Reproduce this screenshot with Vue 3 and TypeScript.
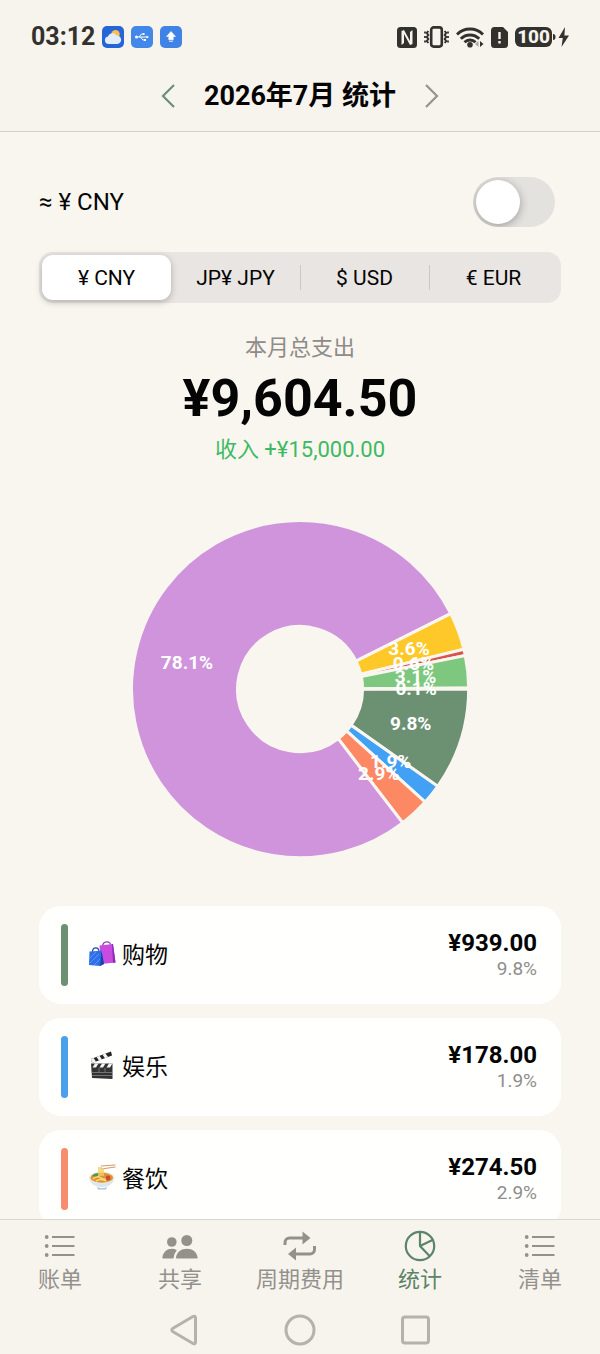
<script setup lang="ts">
import { computed, ref } from 'vue'

interface Slice {
  share: number
  color: string
}

interface Category {
  name: string
  icon: 'bags' | 'film' | 'noodles'
  amount: string
  share: string
  color: string
}

const currencies = ['¥ CNY', 'JP¥ JPY', '$ USD', '€ EUR']
const currency = ref('¥ CNY')
const convert = ref(false)

const slices: Slice[] = [
  { share: 9.8, color: '#6b9172' },
  { share: 1.9, color: '#42a1f4' },
  { share: 2.9, color: '#fd8964' },
  { share: 78.1, color: '#cf94dc' },
  { share: 3.6, color: '#fec928' },
  { share: 0.6, color: '#d9534f' },
  { share: 3.1, color: '#7dc87e' },
  { share: 0.1, color: '#8d9a90' },
]

const categories: Category[] = [
  { name: '购物', icon: 'bags', amount: '¥939.00', share: '9.8%', color: '#6b9172' },
  { name: '娱乐', icon: 'film', amount: '¥178.00', share: '1.9%', color: '#4aa0ea' },
  { name: '餐饮', icon: 'noodles', amount: '¥274.50', share: '2.9%', color: '#f78d6f' },
]

const tabs = [
  { label: '账单', icon: 'list' },
  { label: '共享', icon: 'people' },
  { label: '周期费用', icon: 'repeat' },
  { label: '统计', icon: 'pie' },
  { label: '清单', icon: 'list' },
]
const activeTab = '统计'

const OUTER = 168.5
const INNER = 62.5
const LABEL = 116

function point(radius: number, angle: number): string {
  return `${(radius * Math.cos(angle)).toFixed(2)} ${(radius * Math.sin(angle)).toFixed(2)}`
}

// Slices run clockwise starting at three o'clock.
const arcs = computed(() => {
  const total = slices.reduce((sum, s) => sum + s.share, 0)
  let start = 0
  return slices.map((s) => {
    const sweep = (s.share / total) * Math.PI * 2
    const end = start + sweep
    const mid = start + sweep / 2
    const large = sweep > Math.PI ? 1 : 0
    const d =
      `M${point(OUTER, start)} A${OUTER} ${OUTER} 0 ${large} 1 ${point(OUTER, end)} ` +
      `L${point(INNER, end)} A${INNER} ${INNER} 0 ${large} 0 ${point(INNER, start)} Z`
    start = end
    return {
      d,
      color: s.color,
      label: `${s.share.toFixed(1)}%`,
      x: LABEL * Math.cos(mid),
      y: LABEL * Math.sin(mid),
    }
  })
})
</script>

<template>
  <div class="screen">
    <header class="top">
      <div class="status">
        <div class="status-group">
          <span class="clock">03:12</span>
          <svg class="app-icon" viewBox="0 0 22 22" aria-hidden="true">
            <rect width="22" height="22" rx="5" fill="#2465d8" />
            <circle cx="13.5" cy="8.2" r="4.2" fill="#fbbf4c" />
            <path d="M6.5 18a3.8 3.8 0 0 1-.6-7.5A4.8 4.8 0 0 1 14.5 9.6a4.2 4.2 0 0 1 .8 8.4z" fill="#e3ecf8" />
          </svg>
          <svg class="app-icon" viewBox="0 0 22 22" aria-hidden="true">
            <rect width="22" height="22" rx="5" fill="#4388e8" />
            <g fill="none" stroke="#fff" stroke-width="1">
              <path d="M5 11h11M8 11l2.5-3h2M9.5 11l2.5 3h2" />
            </g>
            <circle cx="5.5" cy="11" r="1.5" fill="#fff" />
            <circle cx="12.7" cy="8" r="1.1" fill="#fff" />
            <rect x="13" y="13" width="2" height="2" fill="#fff" />
            <path d="M15.5 9.500l2.500 1.500-2.500 1.500z" fill="#fff" />
          </svg>
          <svg class="app-icon" viewBox="0 0 22 22" aria-hidden="true">
            <rect width="22" height="22" rx="5" fill="#4083e6" />
            <path d="M11 5.500l4.500 5h-2.300v3.300H8.800v-3.300H6.500z" fill="#fff" stroke="#fff" stroke-width=".6" stroke-linejoin="round" />
            <path d="M9 15.300h4" stroke="#d5e5fb" stroke-width="1" />
          </svg>
        </div>
        <div class="status-group">
          <svg width="20" height="21" viewBox="0 0 20 21" aria-hidden="true">
            <rect width="20" height="21" rx="3.5" fill="#33312d" />
            <path d="M4.500 18V4l2.500-1 6 11V5l2.500-2v14L13 18 7 7v9z" fill="#f7f4ee" />
          </svg>
          <svg width="25" height="22" viewBox="0 0 25 22" aria-hidden="true">
            <rect x="7.2" y="1.4" width="10.6" height="19.2" rx="2.5" fill="none" stroke="#33312d" stroke-width="2.6" />
            <path d="M4.300 5l-1.500 2 1.500 2-1.500 2 1.500 2-1.500 2 1.500 2M20.700 5l1.500 2-1.500 2 1.500 2-1.500 2 1.500 2-1.500 2" fill="none" stroke="#33312d" stroke-width="2" />
            <path d="M1 5.500v2M1 10v2M1 14.500v2M24 5.500v2M24 10v2M24 14.500v2" stroke="#33312d" stroke-width="1.8" />
          </svg>
          <svg width="28" height="22" viewBox="0 0 28 22" aria-hidden="true">
            <g fill="none" stroke="#33312d" stroke-width="3">
              <path d="M1 8.500a18.300 18.300 0 0 1 26 0" />
              <path d="M4.800 12.700a13 13 0 0 1 18.400 0" />
              <path d="M8.500 16.300a7.800 7.800 0 0 1 11 0" />
            </g>
            <circle cx="14" cy="18.7" r="2.8" fill="#33312d" />
            <path d="M22.500 15v6l-3.500-3z" fill="#aaa7a2" />
            <path d="M24 15v6l3.500-3z" fill="#33312d" />
          </svg>
          <svg width="17" height="21" viewBox="0 0 17 21" aria-hidden="true">
            <path d="M3.500 0h8.500l5 5v12.500a3.500 3.500 0 0 1-3.500 3.500h-10A3.500 3.500 0 0 1 0 17.500v-14A3.500 3.500 0 0 1 3.500 0z" fill="#33312d" />
            <path d="M8.500 5v7M8.500 14v2.500" stroke="#f7f4ee" stroke-width="2.4" />
          </svg>
          <span class="power">
            <span class="battery">100</span>
            <svg width="16" height="20" viewBox="0 0 16 20" aria-hidden="true">
              <path d="M0 7q2.500 0 2.500 3T0 13z" fill="#33312d" />
              <path d="M12 0L5.500 11h4.300L8.500 20 16 8.500h-4.600z" fill="#33312d" />
            </svg>
          </span>
        </div>
      </div>
      <div class="month">
        <button class="step" type="button" aria-label="上个月">
          <svg width="14" height="24" viewBox="0 0 14 24" aria-hidden="true">
            <path d="M13 1L2 12l11 11" fill="none" stroke="#6a9078" stroke-width="2.2" />
          </svg>
        </button>
        <h1>2026年7月 统计</h1>
        <button class="step" type="button" aria-label="下个月">
          <svg width="14" height="24" viewBox="0 0 14 24" aria-hidden="true">
            <path d="M1 1l11 11L1 23" fill="none" stroke="#96948f" stroke-width="2.2" />
          </svg>
        </button>
      </div>
    </header>

    <main>
      <div class="convert">
        <label for="convert">≈ ¥ CNY</label>
        <input id="convert" v-model="convert" type="checkbox" role="switch" />
      </div>

      <div class="segments" role="radiogroup" aria-label="货币">
        <label v-for="c in currencies" :key="c" class="segment">
          <input v-model="currency" type="radio" name="currency" :value="c" />
          <span>{{ c }}</span>
        </label>
      </div>

      <section class="summary">
        <p class="caption">本月总支出</p>
        <p class="total">¥9,604.50</p>
        <p class="income">收入 +¥15,000.00</p>
      </section>

      <svg class="chart" viewBox="-168 -168 336 336" role="img" aria-label="支出分类">
        <path v-for="a in arcs" :key="a.label" :d="a.d" :fill="a.color" />
        <text v-for="a in arcs" :key="a.label" :x="a.x" :y="a.y" dy="6">{{ a.label }}</text>
      </svg>

      <ul class="categories">
        <li v-for="c in categories" :key="c.name" class="card">
          <span class="bar" :style="{ background: c.color }"></span>
          <span class="title">
            <svg v-if="c.icon === 'bags'" class="emoji" viewBox="0 0 28 28" aria-hidden="true">
              <path d="M14.500 8c0-6.500 8.500-7 8.500-.5" fill="none" stroke="#8a3fb0" stroke-width="1.2" />
              <path d="M11.500 6.500L25 5l2.500 18.500L13 25z" fill="#c94be0" />
              <path d="M24 5.100L25 5l2.500 18.500-2.500.3z" fill="#8e2bb4" />
              <path d="M4.500 13c0-5.500 6.500-5.500 6.500 0" fill="none" stroke="#234aa0" stroke-width="1.2" />
              <path d="M1.500 12.500l12-.8L16 25l-4 2L1 26z" fill="#2f6fe8" />
              <path d="M13.500 11.700L16 25l-4 2z" fill="#1b45ad" />
              <path d="M2 19l6-6M2 24l9-9M6 26l6-6" stroke="#5c96f5" stroke-width="1" />
            </svg>
            <svg v-else-if="c.icon === 'film'" class="emoji" viewBox="0 0 28 28" aria-hidden="true">
              <path d="M3 8L23 .5l1 4L4 12z" fill="#252525" />
              <path d="M8.500 5.900l3-1.100 2.500 3.600-3 1.200zM14.500 3.700l3-1.100L20 6l-3 1.200zM3 8l2.500-1L8 10.600 4 12z" fill="#f4f4f4" />
              <path d="M3 12.500h21.500V28L4 27z" fill="#333" />
              <path d="M7 12.500h3.500l-2.500 4H4.500zM14 12.500h3.500l-2.500 4h-3.500zM21 12.500h3.500l-2.500 4h-3.500z" fill="#f4f4f4" />
              <path d="M4 21.500h20M4 24.500h20M11 17v4M17 17v4" stroke="#858585" stroke-width=".8" />
            </svg>
            <svg v-else class="emoji" viewBox="0 0 28 28" aria-hidden="true">
              <path d="M13 3L27.500 2M13 6l14.500-2" stroke="#d39a6a" stroke-width="1.2" />
              <path d="M1 14c0 13 25 14 25.500 0z" fill="#dce6ef" />
              <path d="M9 24q5 2.500 10 0l-1 2.500h-8z" fill="#a8c4de" />
              <ellipse cx="13.8" cy="14.5" rx="12.6" ry="6" fill="#f3ead8" />
              <ellipse cx="13.8" cy="14.8" rx="11.3" ry="5" fill="#dd9338" />
              <path d="M4 12.500q3-3 7-2l-2 4z" fill="#4f9a4c" />
              <path d="M11 13V4M13 13V3.500M15 13V5" stroke="#f2ce66" stroke-width="1.5" />
              <path d="M5 16q4-4 8-1t8-1M8 18q5-3 10 0" fill="none" stroke="#f8dc78" stroke-width="1.5" />
              <circle cx="20" cy="15" r="2.4" fill="#c94c32" />
            </svg>
            <span>{{ c.name }}</span>
          </span>
          <span class="figures">
            <strong>{{ c.amount }}</strong>
            <small>{{ c.share }}</small>
          </span>
        </li>
      </ul>
    </main>

    <footer>
      <nav class="tabs">
        <a v-for="t in tabs" :key="t.label" href="#" :class="{ active: t.label === activeTab }">
          <svg v-if="t.icon === 'list'" width="36" height="32" viewBox="0 0 36 32" aria-hidden="true">
            <path d="M10 7h22.500M10 16h22.500M10 25h22.500" stroke="currentColor" stroke-width="2.2" />
            <g fill="currentColor">
              <circle cx="4.7" cy="7" r="1.9" />
              <circle cx="4.7" cy="16" r="1.9" />
              <circle cx="4.7" cy="25" r="1.9" />
            </g>
          </svg>
          <svg v-else-if="t.icon === 'people'" width="36" height="32" viewBox="0 0 36 32" fill="currentColor" aria-hidden="true">
            <circle cx="9.8" cy="12" r="4.8" />
            <circle cx="24.8" cy="10.5" r="5.5" />
            <path d="M1 28.500q-.8 0-.6-1.200C1.300 22 5 18.800 9.800 18.800q2.800 0 5 1.400-2.600 3-3.400 8.300z" />
            <path d="M14.800 28.500q-1 0-.8-1.200C15 22 19 18.800 24.800 18.800S34.600 22 35.600 27.300q.2 1.200-.8 1.200z" />
          </svg>
          <svg v-else-if="t.icon === 'repeat'" width="36" height="32" viewBox="0 0 36 32" aria-hidden="true">
            <path d="M3 15v-2.500a4.500 4.500 0 0 1 4.500-4.500H22M32.500 16v3.500A4.500 4.500 0 0 1 28 24H14" fill="none" stroke="currentColor" stroke-width="3" />
            <path d="M20.500 1.500l8 6.500-8 6.500zM14 17.500L6 24l8 6.500z" fill="currentColor" />
          </svg>
          <svg v-else width="36" height="32" viewBox="0 0 36 32" aria-hidden="true">
            <circle cx="18" cy="16" r="14.2" fill="none" stroke="currentColor" stroke-width="2.2" />
            <path d="M18 2v14l9.500 10M18 16l12.500-6" fill="none" stroke="currentColor" stroke-width="2.2" />
          </svg>
          <span>{{ t.label }}</span>
        </a>
      </nav>
      <div class="keys">
        <button type="button" aria-label="返回">
          <svg width="32" height="32" viewBox="0 0 32 32" aria-hidden="true">
            <path d="M25 2.500L5 14.300q-2.500 1.700 0 3.400L25 29.500q2.500 1.200 2.500-1.500V4q0-2.700-2.500-1.500z" />
          </svg>
        </button>
        <button type="button" aria-label="主屏幕">
          <svg width="32" height="32" viewBox="0 0 32 32" aria-hidden="true">
            <circle cx="16" cy="16" r="14" />
          </svg>
        </button>
        <button type="button" aria-label="最近任务">
          <svg width="32" height="32" viewBox="0 0 32 32" aria-hidden="true">
            <rect x="2.5" y="3" width="26" height="26" rx="2.5" />
          </svg>
        </button>
      </div>
    </footer>
  </div>
</template>

<style>
body {
  margin: 0;
  background: #f9f6f0;
}
</style>

<style scoped>
.screen {
  display: flex;
  flex-direction: column;
  height: 100vh;
  background: #f9f6f0;
  color: #050505;
  font-family: Roboto, "Noto Sans CJK SC", sans-serif;
  font-size: 22px;
}

p,
h1,
ul {
  margin: 0;
  padding: 0;
}

button {
  padding: 0;
  border: 0;
  background: none;
}

svg {
  display: block;
  flex: none;
}

.top {
  flex: none;
  background: #f7f4ee;
  border-bottom: 1px solid #d4d1cc;
}

.status {
  display: flex;
  align-items: center;
  justify-content: space-between;
  height: 60px;
  padding: 14px 31px 0;
  box-sizing: border-box;
}

.status-group {
  display: flex;
  align-items: center;
  gap: 7px;
}

.clock {
  color: #33312d;
  font-size: 25px;
  font-weight: 700;
  line-height: 28px;
}

.app-icon {
  width: 22px;
  height: 22px;
}

.power {
  display: flex;
  align-items: center;
  gap: 1px;
}

.battery {
  padding: 0 2px;
  border-radius: 6px;
  background: #33312d;
  color: #f7f4ee;
  font-size: 19px;
  font-weight: 800;
  line-height: 20px;
}

.month {
  display: flex;
  align-items: center;
  justify-content: center;
  gap: 29px;
  height: 71px;
}

.step {
  display: flex;
}

.month h1 {
  font-size: 27px;
  font-weight: 700;
  line-height: 36px;
}

main {
  flex: 1;
  min-height: 0;
  overflow: hidden;
  padding: 45px 39px 0;
}

.convert {
  display: flex;
  align-items: center;
  justify-content: space-between;
  padding-right: 6px;
  font-size: 24px;
}

.convert input {
  appearance: none;
  width: 82px;
  height: 50px;
  margin: 0;
  padding: 3px;
  border-radius: 25px;
  background: #e4e2df;
  overflow: hidden;
}

.convert input::before {
  content: "";
  display: block;
  width: 44px;
  height: 44px;
  border-radius: 50%;
  background: #fff;
  box-shadow: 0 2px 10px rgba(0, 0, 0, 0.32);
}

.convert input:checked {
  background: #6b9172;
}

.convert input:checked::before {
  margin-left: auto;
}

.segments {
  display: flex;
  height: 51px;
  margin-top: 25px;
  padding: 3px;
  box-sizing: border-box;
  border-radius: 14px;
  background: #e9e5e2;
  font-size: 21px;
}

.segment {
  position: relative;
  display: flex;
  flex: 1;
}

.segment input {
  position: absolute;
  opacity: 0;
}

.segment span {
  display: flex;
  flex: 1;
  align-items: center;
  justify-content: center;
  border-radius: 11px;
}

.segment input:checked + span {
  background: #fff;
  box-shadow: 0 2px 7px rgba(0, 0, 0, 0.25);
}

.segment:nth-child(n + 3)::before {
  content: "";
  width: 1px;
  height: 25px;
  margin-right: -1px;
  align-self: center;
  background: #cbc8c5;
}

.summary {
  display: flex;
  flex-direction: column;
  gap: 4px;
  margin-top: 30px;
  line-height: 30px;
  text-align: center;
}

.caption {
  color: #8e8b88;
}

.total {
  font-size: 52px;
  font-weight: 700;
  line-height: 64px;
}

.income {
  color: #3dba61;
}

.chart {
  width: 64.4%;
  margin: 56px auto 49px;
  overflow: visible;
}

.chart path {
  stroke: #f9f6f0;
  stroke-width: 3px;
}

.chart text {
  fill: #fff;
  font-size: 19px;
  font-weight: 700;
  text-anchor: middle;
}

.categories {
  display: flex;
  flex-direction: column;
  gap: 14px;
  list-style: none;
}

.card {
  display: flex;
  align-items: center;
  height: 98px;
  padding: 0 24px 0 22px;
  box-sizing: border-box;
  border-radius: 22px;
  background: #fffffe;
}

.bar {
  width: 7px;
  height: 62px;
  margin-right: 20px;
  border-radius: 4px;
}

.title {
  display: flex;
  align-items: center;
  gap: 6px;
  padding-bottom: 4px;
  font-size: 23px;
}

.emoji {
  width: 28px;
  height: 28px;
}

.figures {
  display: flex;
  flex-direction: column;
  margin-left: auto;
  text-align: right;
}

.figures strong {
  font-size: 24px;
  font-weight: 700;
  line-height: 28px;
}

.figures small {
  color: #8f8d8b;
  font-size: 19px;
  line-height: 24px;
}

footer {
  flex: none;
  border-top: 1px solid #d9d6d1;
  background: #f7f4ee;
}

.tabs {
  display: flex;
  padding-top: 10px;
}

.tabs a {
  display: flex;
  flex: 1;
  flex-direction: column;
  align-items: center;
  gap: 2px;
  color: #94918c;
  line-height: 32px;
  text-decoration: none;
}

.tabs a.active {
  color: #5b8468;
}

.keys {
  display: flex;
  justify-content: center;
  gap: 84px;
  padding: 18px 0 8px;
}

.keys svg {
  fill: none;
  stroke: #b5b1ac;
  stroke-width: 3px;
}
</style>
